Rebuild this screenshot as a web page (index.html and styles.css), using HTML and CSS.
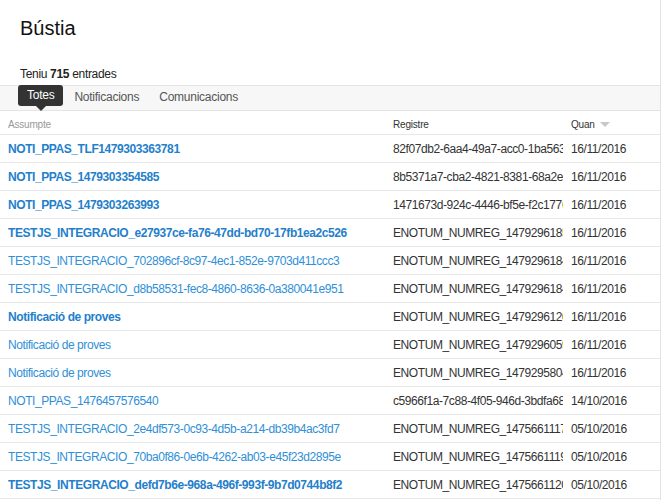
FILE: index.html
```html
<!DOCTYPE html>
<html>
<head>
<meta charset="utf-8">
<link rel="stylesheet" href="styles.css">
</head>
<body>
<div class="page">
  <h1 class="title">Bústia</h1>
  <p class="count">Teniu <b>715</b> entrades</p>
  <nav class="tabs">
    <span class="tab active">Totes</span>
    <span class="tab">Notificacions</span>
    <span class="tab">Comunicacions</span>
  </nav>
  <div class="table">
    <div class="row head">
      <div class="c1">Assumpte</div>
      <div class="c2">Registre</div>
      <div class="c3">Quan <span class="caret"></span></div>
    </div>
    <div class="row unread"><div class="c1"><a>NOTI_PPAS_TLF1479303363781</a></div><div class="c2">82f07db2-6aa4-49a7-acc0-1ba563a1b2c4</div><div class="c3">16/11/2016</div></div>
    <div class="row unread"><div class="c1"><a>NOTI_PPAS_1479303354585</a></div><div class="c2">8b5371a7-cba2-4821-8381-68a2e6f1c9d0</div><div class="c3">16/11/2016</div></div>
    <div class="row unread"><div class="c1"><a>NOTI_PPAS_1479303263993</a></div><div class="c2">1471673d-924c-4446-bf5e-f2c1776a0b3e</div><div class="c3">16/11/2016</div></div>
    <div class="row unread"><div class="c1"><a>TESTJS_INTEGRACIO_e27937ce-fa76-47dd-bd70-17fb1ea2c526</a></div><div class="c2">ENOTUM_NUMREG_1479296185123</div><div class="c3">16/11/2016</div></div>
    <div class="row"><div class="c1"><a>TESTJS_INTEGRACIO_702896cf-8c97-4ec1-852e-9703d411ccc3</a></div><div class="c2">ENOTUM_NUMREG_1479296184567</div><div class="c3">16/11/2016</div></div>
    <div class="row"><div class="c1"><a>TESTJS_INTEGRACIO_d8b58531-fec8-4860-8636-0a380041e951</a></div><div class="c2">ENOTUM_NUMREG_1479296184012</div><div class="c3">16/11/2016</div></div>
    <div class="row unread"><div class="c1"><a>Notificació de proves</a></div><div class="c2">ENOTUM_NUMREG_1479296120345</div><div class="c3">16/11/2016</div></div>
    <div class="row"><div class="c1"><a>Notificació de proves</a></div><div class="c2">ENOTUM_NUMREG_1479296059876</div><div class="c3">16/11/2016</div></div>
    <div class="row"><div class="c1"><a>Notificació de proves</a></div><div class="c2">ENOTUM_NUMREG_1479295804321</div><div class="c3">16/11/2016</div></div>
    <div class="row"><div class="c1"><a>NOTI_PPAS_1476457576540</a></div><div class="c2">c5966f1a-7c88-4f05-946d-3bdfa68e2a10</div><div class="c3">14/10/2016</div></div>
    <div class="row"><div class="c1"><a>TESTJS_INTEGRACIO_2e4df573-0c93-4d5b-a214-db39b4ac3fd7</a></div><div class="c2">ENOTUM_NUMREG_1475661117654</div><div class="c3">05/10/2016</div></div>
    <div class="row"><div class="c1"><a>TESTJS_INTEGRACIO_70ba0f86-0e6b-4262-ab03-e45f23d2895e</a></div><div class="c2">ENOTUM_NUMREG_1475661119210</div><div class="c3">05/10/2016</div></div>
    <div class="row unread"><div class="c1"><a>TESTJS_INTEGRACIO_defd7b6e-968a-496f-993f-9b7d0744b8f2</a></div><div class="c2">ENOTUM_NUMREG_1475661120987</div><div class="c3">05/10/2016</div></div>
  </div>
</div>
</body>
</html>
```

FILE: styles.css
```css
html, body {
  margin: 0;
  padding: 0;
  background: #fff;
}
body {
  font-family: "Liberation Sans", Arial, sans-serif;
  font-size: 12px;
  letter-spacing: -0.42px;
  color: #333;
}
.page {
  width: 660px;
  min-height: 500px;
  border-right: 1px solid #e2e2e2;
  overflow: hidden;
}
.title {
  margin: 0;
  padding: 16px 20px 0;
  font-size: 20px;
  line-height: 24px;
  font-weight: normal;
  letter-spacing: 0;
  color: #111;
}
.count {
  margin: 0;
  padding: 27px 20px 0;
  line-height: 14px;
  letter-spacing: -0.32px;
  color: #222;
}
.count b { font-weight: bold; }
.tabs {
  margin-top: 4px;
  height: 24px;
  border-top: 1px solid #e4e4e4;
  border-bottom: 1px solid #e4e4e4;
  background: #f7f7f7;
  display: flex;
  align-items: flex-start;
  padding-left: 18px;
  letter-spacing: -0.25px;
}
.tab {
  color: #555;
  line-height: 22px;
  padding: 0 10px;
}
.tab.active {
  position: relative;
  background: #333;
  color: #fff;
  border-radius: 3px;
  padding: 0 9px;
  margin-top: -1px;
  line-height: 21px;
  margin-right: 1px;
}
.tab.active::after {
  content: "";
  position: absolute;
  left: 50%;
  bottom: -5px;
  margin-left: -5px;
  border-left: 5px solid transparent;
  border-right: 5px solid transparent;
  border-top: 5px solid #333;
}
.row {
  display: grid;
  grid-template-columns: 385px 178px 1fr;
  height: 27px;
  border-bottom: 1px solid #e8e8e8;
  align-items: center;
}
.row > div {
  padding-left: 8px;
  white-space: nowrap;
  overflow: hidden;
}
.row.head {
  height: 20px;
  padding-top: 3px;
  font-size: 10px;
  letter-spacing: -0.2px;
  color: #999;
}
.caret {
  display: inline-block;
  width: 0;
  height: 0;
  border-left: 5px solid transparent;
  border-right: 5px solid transparent;
  border-top: 5px solid #c8c8c8;
  margin-left: 3px;
  vertical-align: middle;
}
.row a {
  color: #2f8fd8;
  text-decoration: none;
}
.row.unread a {
  font-weight: bold;
  color: #1f80cc;
}
.row .c2 { color: #333; }
.row .c3 { color: #333; }
```
